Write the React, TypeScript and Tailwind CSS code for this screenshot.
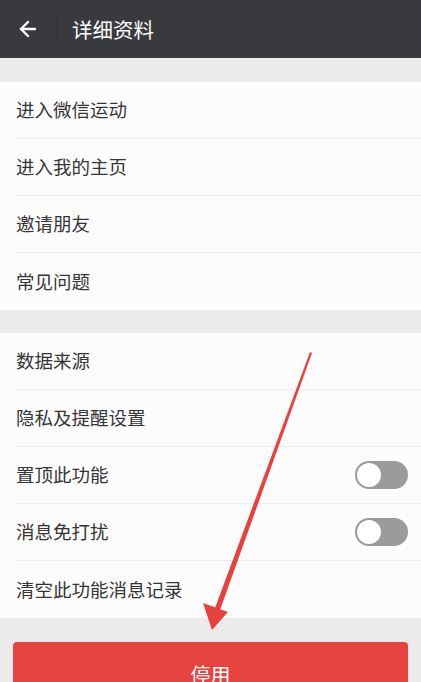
import { ArrowLeft } from "lucide-react";

const font = { fontFamily: '"Noto Sans CJK SC", "Noto Sans", sans-serif' };

const groupOne = ["进入微信运动", "进入我的主页", "邀请朋友", "常见问题"];

const groupTwo = [
  { label: "数据来源" },
  { label: "隐私及提醒设置" },
  { label: "置顶此功能", toggle: true },
  { label: "消息免打扰", toggle: true },
  { label: "清空此功能消息记录" },
];

function Toggle() {
  return (
    <div className="flex h-[28px] w-[53px] items-center rounded-full bg-[#9b9b9b] p-[2px]">
      <div className="h-[24px] w-[24px] rounded-full bg-white" />
    </div>
  );
}

function Row({ label, toggle, last }: { label: string; toggle?: boolean; last?: boolean }) {
  return (
    <div className="pl-4">
      <div
        className={`flex h-[57px] items-center justify-between pr-[13px] ${
          last ? "" : "border-b border-[#ececec]"
        }`}
      >
        <span className="text-[18.5px] text-[#353535]">{label}</span>
        {toggle && <Toggle />}
      </div>
    </div>
  );
}

export default function App() {
  return (
    <div className="relative h-[682px] w-[421px] overflow-hidden bg-[#ebebeb]" style={font}>
      <div className="flex h-[58px] items-center bg-[#393a3e]">
        <div className="flex w-[57px] items-center justify-center">
          <ArrowLeft size={24} strokeWidth={2.4} className="ml-[-2px] text-white" />
        </div>
        <div className="h-[30px] w-px bg-[#2e2f33]" />
        <span className="ml-[14px] text-[20.5px] text-white">详细资料</span>
      </div>

      <div className="mt-[24px] bg-[#fdfcfd]">
        {groupOne.map((label, i) => (
          <Row key={label} label={label} last={i === groupOne.length - 1} />
        ))}
      </div>

      <div className="mt-[23px] bg-[#fdfcfd]">
        {groupTwo.map((item, i) => (
          <Row key={item.label} label={item.label} toggle={item.toggle} last={i === groupTwo.length - 1} />
        ))}
      </div>

      <div className="mx-[13px] mt-[24px] flex h-[56px] items-center justify-center rounded-[4px] bg-[#e64340]">
        <span className="mt-[10px] text-[20px] text-white">停用</span>
      </div>

      <svg
        className="pointer-events-none absolute left-0 top-0"
        width="421"
        height="682"
        viewBox="0 0 421 682"
      >
        <polygon points="310,352 312,353 220,610 215,608" fill="#e8403d" />
        <polygon points="212,630 203,603 228,612" fill="#e8403d" />
      </svg>
    </div>
  );
}
